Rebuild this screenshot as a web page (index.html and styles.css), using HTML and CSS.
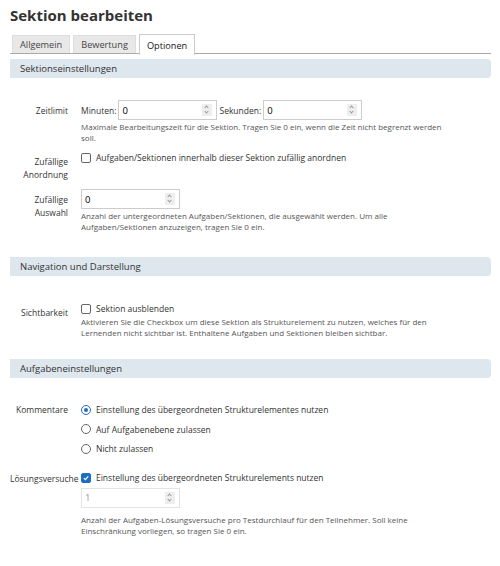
FILE: index.html
```html
<!DOCTYPE html>
<html lang="de">
<head>
    <meta charset="UTF-8">
    <title>Sektion bearbeiten</title>
    <link rel="stylesheet" href="styles.css">
</head>
<body>
    <div class="page">
        <h1 class="title">Sektion bearbeiten</h1>

        <div class="tabs">
            <span class="tab">Allgemein</span>
            <span class="tab">Bewertung</span>
            <span class="tab active">Optionen</span>
        </div>

        <h2 class="section-header">Sektionseinstellungen</h2>

        <div class="form-row first">
            <div class="form-label">Zeitlimit</div>
            <div class="form-field">
                <div class="inline-inputs">
                    <label>Minuten:</label>
                    <div class="number-input"><span>0</span><i class="spinner"></i></div>
                    <label>Sekunden:</label>
                    <div class="number-input"><span>0</span><i class="spinner"></i></div>
                </div>
                <p class="help">Maximale Bearbeitungszeit für die Sektion. Tragen Sie 0 ein, wenn die Zeit nicht begrenzt werden soll.</p>
            </div>
        </div>

        <div class="form-row">
            <div class="form-label">Zufällige Anordnung</div>
            <div class="form-field">
                <label class="check"><span class="box"></span>Aufgaben/Sektionen innerhalb dieser Sektion zufällig anordnen</label>
            </div>
        </div>

        <div class="form-row">
            <div class="form-label">Zufällige Auswahl</div>
            <div class="form-field">
                <div class="number-input"><span>0</span><i class="spinner"></i></div>
                <p class="help">Anzahl der untergeordneten Aufgaben/Sektionen, die ausgewählt werden. Um alle Aufgaben/Sektionen anzuzeigen, tragen Sie 0 ein.</p>
            </div>
        </div>

        <h2 class="section-header spaced wide">Navigation und Darstellung</h2>

        <div class="form-row first check-first">
            <div class="form-label">Sichtbarkeit</div>
            <div class="form-field">
                <label class="check"><span class="box"></span>Sektion ausblenden</label>
                <p class="help tight">Aktivieren Sie die Checkbox um diese Sektion als Strukturelement zu nutzen, welches für den Lernenden nicht sichtbar ist. Enthaltene Aufgaben und Sektionen bleiben sichtbar.</p>
            </div>
        </div>

        <h2 class="section-header spaced">Aufgabeneinstellungen</h2>

        <div class="form-row first">
            <div class="form-label radio-label">Kommentare</div>
            <div class="form-field">
                <label class="check radio-line"><span class="radio checked"></span>Einstellung des übergeordneten Strukturelementes nutzen</label>
                <label class="check radio-line"><span class="radio"></span>Auf Aufgabenebene zulassen</label>
                <label class="check radio-line"><span class="radio"></span>Nicht zulassen</label>
            </div>
        </div>

        <div class="form-row attempts">
            <div class="form-label check-label">Lösungsversuche</div>
            <div class="form-field">
                <label class="check"><span class="box checked">
                    <svg viewBox="0 0 10 10" width="10" height="10"><path d="M2.3 5.1 L4.2 7 L7.8 2.9" fill="none" stroke="#fff" stroke-width="1.5"/></svg>
                </span>Einstellung des übergeordneten Strukturelements nutzen</label>
                <div class="number-input disabled"><span>1</span><i class="spinner"></i></div>
                <p class="help spaced">Anzahl der Aufgaben-Lösungsversuche pro Testdurchlauf für den Teilnehmer. Soll keine Einschränkung vorliegen, so tragen Sie 0 ein.</p>
            </div>
        </div>
    </div>
</body>
</html>
```

FILE: styles.css
```css
body {
    margin: 0;
    font-family: "Open Sans", "Liberation Sans", sans-serif;
    color: #222;
    background: #fff;
}

.page {
    width: 481px;
    padding: 5px 9px 0 10px;
}

.title {
    font-size: 15px;
    font-weight: bold;
    color: #333;
    margin: 0 0 10px 0;
    line-height: 20px;
}

.tabs {
    display: flex;
    gap: 3px;
    padding-left: 2px;
    border-bottom: 1px solid #aaa;
    height: 18px;
}

.tab {
    background: #e8e8e8;
    color: #444;
    font-size: 9.2px;
    line-height: 18px;
    padding: 0 7px;
    border: 1px solid #ddd;
    border-bottom: none;
}

.tab.active {
    background: #fff;
    color: #161616;
    border-color: #ccc;
    height: 20px;
    margin-top: -1px;
    line-height: 21px;
}

.section-header {
    background: #dee6ee;
    font-size: 9.5px;
    font-weight: normal;
    color: #333;
    margin: 5px 0 0 0;
    padding: 0 10px;
    height: 19px;
    line-height: 19px;
    border-radius: 0 4px 4px 0;
}

.section-header.spaced {
    margin-top: 21px;
}

.section-header.wide {
    margin-top: 25px;
}

.form-row {
    display: grid;
    grid-template-columns: 58px 1fr;
    column-gap: 13px;
    margin-top: 8px;
    font-size: 8.5px;
}

.form-row.first {
    margin-top: 22px;
}

.form-row.check-first {
    margin-top: 26px;
}

.form-row.attempts {
    margin-top: 12px;
}

.form-label {
    text-align: right;
    line-height: 13px;
    padding-top: 4px;
    color: #333;
}

.form-label.radio-label {
    padding-top: 3px;
}

.form-label.check-label {
    padding-top: 1px;
}

.form-field {
    min-width: 0;
}

.inline-inputs {
    display: flex;
    align-items: center;
    gap: 2px;
}

.inline-inputs label {
    color: #333;
}

.number-input {
    width: 94px;
    height: 18px;
    border: 1px solid #ccc;
    display: flex;
    align-items: center;
    justify-content: space-between;
    padding-left: 3px;
    font-size: 9.5px;
    color: #000;
}

.number-input.disabled {
    color: #999;
    border-color: #e3e3e3;
    margin-top: 3px;
}

.spinner {
    width: 10px;
    height: 12px;
    margin-right: 4px;
    background: #eee;
    position: relative;
}

.spinner::before,
.spinner::after {
    content: "";
    position: absolute;
    left: 3px;
    width: 2px;
    height: 2px;
    border-left: 1px solid #999;
    border-top: 1px solid #999;
}

.spinner::before {
    top: 2px;
    transform: rotate(45deg);
}

.spinner::after {
    top: 6px;
    transform: rotate(225deg);
}

.help {
    font-size: 8px;
    color: #555;
    line-height: 11px;
    margin: 1px 0 0 0;
    max-width: 364px;
}

.help.tight {
    margin-top: 0;
}

.help.spaced {
    margin-top: 6px;
}

.check {
    display: flex;
    align-items: center;
    gap: 5px;
    font-size: 8.5px;
    color: #333;
    line-height: 14px;
}

.radio-line {
    line-height: 19.5px;
}

.box {
    width: 8px;
    height: 8px;
    border: 1px solid #666;
    border-radius: 2px;
    display: inline-flex;
    align-items: center;
    justify-content: center;
    flex: none;
}

.box.checked {
    background: #1f6dc2;
    border-color: #1f6dc2;
}

.radio {
    width: 8px;
    height: 8px;
    border: 1px solid #666;
    border-radius: 50%;
    flex: none;
    position: relative;
}

.radio.checked {
    border-color: #1f6dc2;
}

.radio.checked::after {
    content: "";
    position: absolute;
    left: 2px;
    top: 2px;
    width: 4px;
    height: 4px;
    border-radius: 50%;
    background: #1f6dc2;
}
```
